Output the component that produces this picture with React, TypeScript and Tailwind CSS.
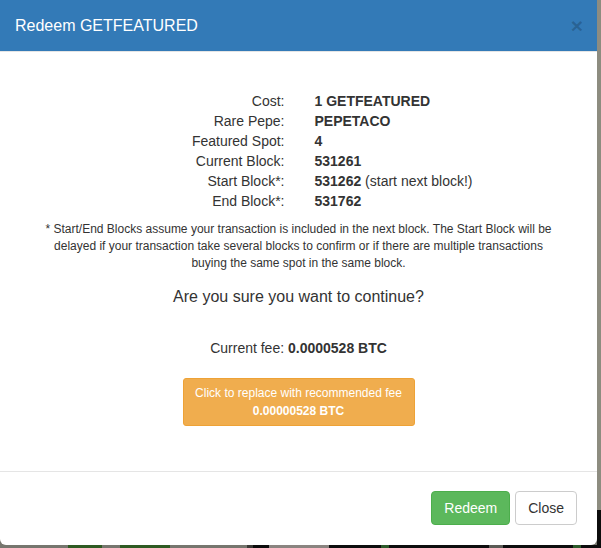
import React from "react";

const rows: { label: string; value: string; note?: string }[] = [
  { label: "Cost:", value: "1 GETFEATURED" },
  { label: "Rare Pepe:", value: "PEPETACO" },
  { label: "Featured Spot:", value: "4" },
  { label: "Current Block:", value: "531261" },
  { label: "Start Block*:", value: "531262", note: " (start next block!)" },
  { label: "End Block*:", value: "531762" },
];

function Backdrop() {
  // strip of the page that shows under the modal edge
  return (
    <div className="flex h-[3px] w-full">
      <div className="flex w-[247px] bg-[#76766e]">
        <div className="ml-[68px] w-[34px] bg-[#2f5a22]" />
        <div className="ml-[18px] w-[50px] bg-[#2f5a22]" />
      </div>
      <div className="w-[6px] bg-[#3a3a36]" />
      <div className="w-[16px] bg-[#0c0c0c]" />
      <div className="w-[60px] bg-[#8a8480]" />
      <div className="flex flex-1 bg-[#0d0d0d]">
        <div className="ml-[52px] w-[8px] bg-[#2c5a2a]" />
        <div className="ml-[100px] w-[14px] bg-[#5a5a55]" />
        <div className="ml-[70px] w-[8px] bg-[#2c5a2a]" />
      </div>
    </div>
  );
}

export default function App() {
  return (
    <div className="flex h-[548px] w-[601px] overflow-hidden bg-[#0d0d0d] font-['Liberation_Sans',Arial,sans-serif] text-[#333]">
      <div className="flex w-[597px] flex-col bg-[#76766e]">
        <div className="flex h-[545px] flex-col overflow-hidden rounded-b-[6px] bg-white">
          <div className="flex h-[52px] items-center justify-between border-b border-[#e5e5e5] bg-[#337ab7] pl-[15px] pr-[14px]">
            <h4 className="text-[16px] leading-[22px] text-white">Redeem GETFEATURED</h4>
            <button className="text-[21px] font-bold leading-none text-black/20">×</button>
          </div>

          <div className="flex h-[419px] flex-col items-center px-[15px] pt-[39px]">
            <div className="grid w-full grid-cols-2 text-[14px] leading-[20px]">
              {rows.map((r) => (
                <React.Fragment key={r.label}>
                  <div className="pr-[14px] text-right">{r.label}</div>
                  <div className="pl-[16px]">
                    <span className="font-bold">{r.value}</span>
                    {r.note}
                  </div>
                </React.Fragment>
              ))}
            </div>

            <p className="mt-[10px] w-[515px] text-center text-[12px] leading-[17px]">
              * Start/End Blocks assume your transaction is included in the next block. The Start Block will be
              delayed if your transaction take several blocks to confirm or if there are multiple transactions
              buying the same spot in the same block.
            </p>

            <h4 className="mt-[14px] text-[16px] leading-[22px]">Are you sure you want to continue?</h4>

            <p className="mt-[30px] text-[14px] leading-[20px]">
              Current fee: <span className="font-bold">0.0000528 BTC</span>
            </p>

            <button className="mt-[20px] w-[232px] rounded-[3px] border border-[#eea236] bg-[#f0ad4e] px-[10px] py-[5px] text-[12px] leading-[18px] text-white">
              Click to replace with recommended fee
              <br />
              <span className="font-bold">0.00000528 BTC</span>
            </button>
          </div>

          <div className="flex flex-1 items-start justify-end gap-[5px] border-t border-[#e5e5e5] pr-[20px] pt-[19px]">
            <button className="h-[34px] rounded-[4px] border border-[#4cae4c] bg-[#5cb85c] px-[12px] text-[14px] text-white">
              Redeem
            </button>
            <button className="h-[34px] rounded-[4px] border border-[#ccc] bg-white px-[12px] text-[14px] text-[#333]">
              Close
            </button>
          </div>
        </div>
        <Backdrop />
      </div>
      <div className="flex w-[4px] flex-col">
        <div className="h-[510px] bg-[#8d8c80]" />
        <div className="flex-1 bg-[#0d0d0d]" />
      </div>
    </div>
  );
}
